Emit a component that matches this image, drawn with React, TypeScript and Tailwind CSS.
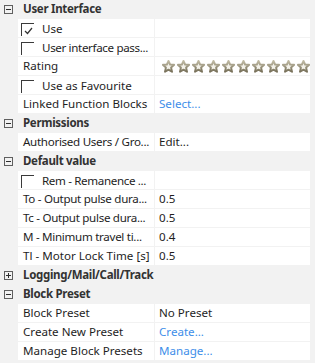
import React from "react";

type Row =
  | { kind: "header"; label: string; open: boolean }
  | { kind: "prop"; label: string; value?: string; link?: boolean; check?: boolean | null; stars?: boolean };

const rows: Row[] = [
  { kind: "header", label: "User Interface", open: true },
  { kind: "prop", label: "Use", check: true },
  { kind: "prop", label: "User interface pass...", check: false },
  { kind: "prop", label: "Rating", stars: true },
  { kind: "prop", label: "Use as Favourite", check: false },
  { kind: "prop", label: "Linked Function Blocks", value: "Select...", link: true },
  { kind: "header", label: "Permissions", open: true },
  { kind: "prop", label: "Authorised Users / Gro...", value: "Edit..." },
  { kind: "header", label: "Default value", open: true },
  { kind: "prop", label: "Rem - Remanence ...", check: false },
  { kind: "prop", label: "To - Output pulse dura...", value: "0.5" },
  { kind: "prop", label: "Tc - Output pulse dura...", value: "0.5" },
  { kind: "prop", label: "M - Minimum travel ti...", value: "0.4" },
  { kind: "prop", label: "Tl - Motor Lock Time [s]", value: "0.5" },
  { kind: "header", label: "Logging/Mail/Call/Track", open: false },
  { kind: "header", label: "Block Preset", open: true },
  { kind: "prop", label: "Block Preset", value: "No Preset" },
  { kind: "prop", label: "Create New Preset", value: "Create...", link: true },
  { kind: "prop", label: "Manage Block Presets", value: "Manage...", link: true },
];

function Expander({ open }: { open: boolean }) {
  return (
    <svg width="9" height="9" viewBox="0 0 9 9" className="block">
      <rect x="0.5" y="0.5" width="8" height="8" fill="none" stroke="#5f5f5f" />
      <line x1="2" y1="4.5" x2="7" y2="4.5" stroke="#2f2f2f" />
      {!open && <line x1="4.5" y1="2" x2="4.5" y2="7" stroke="#2f2f2f" />}
    </svg>
  );
}

function Star() {
  return (
    <svg width="13" height="13" viewBox="0 0 13 13" className="block shrink-0">
      <defs>
        <linearGradient id="sg" x1="0" y1="0" x2="0" y2="1">
          <stop offset="0" stopColor="#c2bca6" />
          <stop offset="1" stopColor="#777059" />
        </linearGradient>
      </defs>
      <path
        d="M6.5 0.8 L8.1 4.5 L12.2 4.8 L9.1 7.5 L10 11.8 L6.5 9.6 L3 11.8 L3.9 7.5 L0.8 4.8 L4.9 4.5 Z"
        fill="#f4f2ea"
        stroke="url(#sg)"
        strokeWidth="1.9"
        strokeLinejoin="round"
      />
    </svg>
  );
}

function Checkbox({ checked }: { checked: boolean }) {
  return (
    <div className="w-[13px] h-[13px] border-l border-t border-[#3a3a3a] relative shrink-0">
      {checked && (
        <svg width="9" height="8" viewBox="0 0 9 8" className="absolute left-[2px] top-[3px]">
          <path d="M1 4 L3.5 6.5 L8 1" fill="none" stroke="#333" strokeWidth="1.2" />
        </svg>
      )}
    </div>
  );
}

export default function App() {
  return (
    <div
      className="w-[315px] h-[363px] bg-[#f2f2f2] overflow-hidden text-[11.6px] text-[#1e1e1e]"
      style={{ fontFamily: '"Noto Sans", "Liberation Sans", sans-serif' }}
    >
      <div className="flex flex-col gap-px">
        {rows.map((r, i) => {
          if (r.kind === "header") {
            return (
              <div key={i} className="h-[18px] flex items-center">
                <div className="w-[23px] pl-[4px] flex items-center">
                  <Expander open={r.open} />
                </div>
                <span className="font-bold text-[11.5px] tracking-[-0.3px] text-[#333333] leading-none whitespace-nowrap">
                  {r.label}
                </span>
              </div>
            );
          }
          const tight = r.label.endsWith("...");
          return (
            <div key={i} className="h-[18px] flex ml-[18px] mr-[5px] gap-px">
              <div className="w-[136px] bg-white flex items-center overflow-hidden whitespace-nowrap">
                {r.check !== undefined && r.check !== null ? (
                  <div className="flex items-center pl-[3px] h-full pt-[2px]">
                    <Checkbox checked={r.check} />
                    <span className={`ml-[8px] leading-none ${tight ? "tracking-[-0.35px]" : ""}`}>{r.label}</span>
                  </div>
                ) : (
                  <span className={`pl-[5px] leading-none ${tight ? "tracking-[-0.3px]" : ""}`}>{r.label}</span>
                )}
              </div>
              <div className="flex-1 bg-white flex items-center overflow-hidden whitespace-nowrap">
                {r.stars ? (
                  <div className="flex gap-[2px] pl-[7px] pt-[1px]">
                    {Array.from({ length: 10 }).map((_, k) => (
                      <Star key={k} />
                    ))}
                  </div>
                ) : r.value ? (
                  <span className={`pl-[4px] leading-none ${r.link ? "text-[#3d8ee9]" : ""}`}>{r.value}</span>
                ) : null}
              </div>
            </div>
          );
        })}
      </div>
    </div>
  );
}
